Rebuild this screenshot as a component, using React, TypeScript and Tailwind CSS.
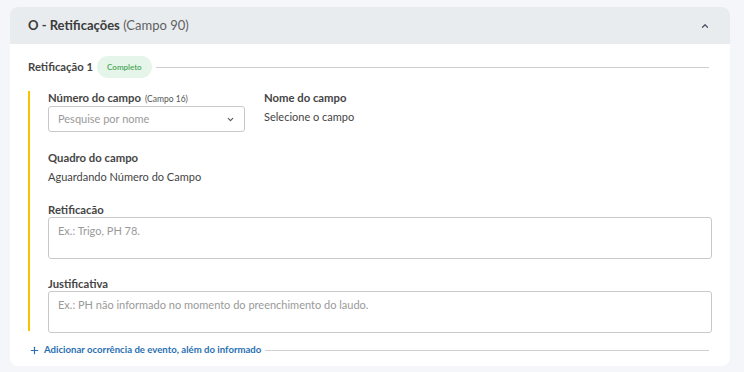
import { ChevronDown, ChevronUp, Plus } from "lucide-react";

const font = { fontFamily: "Lato, 'Noto Sans', sans-serif" };

function Label({ children }: { children: React.ReactNode }) {
  return <div className="text-[11.3px] font-bold leading-[14px] text-[#454545]">{children}</div>;
}

export default function App() {
  return (
    <div className="w-[744px] h-[372px] bg-[#f4f6fa] pt-[7px] px-[10px]" style={font}>
      <div className="w-[720px] h-[359px] rounded-lg bg-white overflow-hidden">
        <header className="h-[37px] bg-[#e9ecef] pl-[18px] pr-[20px] flex items-center justify-between">
          <h2 className="text-[13px] text-[#3b3b3b]">
            <span className="font-bold">O - Retificações</span>{" "}
            <span className="text-[#5f5f5f]">(Campo 90)</span>
          </h2>
          <ChevronUp className="w-[10px] h-[10px] text-[#4a5568]" strokeWidth={3} />
        </header>

        <div className="pl-[18px] pr-[21px] pt-[12px]">
          <div className="flex items-center">
            <span className="text-[11.3px] font-bold text-[#454545]">Retificação 1</span>
            <span className="ml-[4px] h-[22px] px-[10px] rounded-full bg-[#e5f5e9] text-[#45a755] text-[8px] font-semibold flex items-center">
              Completo
            </span>
            <div className="flex-1 ml-[4px] h-px bg-[#cfcfcf]" />
          </div>

          <section className="mt-[13px] border-l-2 border-[#f5c400] pl-[18px] h-[240px]">
            <div className="flex">
              <div className="w-[197px]">
                <div className="flex items-baseline gap-[4px]">
                  <Label>Número do campo</Label>
                  <span className="text-[8.5px] leading-[14px] text-[#555]">(Campo 16)</span>
                </div>
                <div className="h-[26px] border border-[#c9c9c9] rounded-[3px] px-[9px] flex items-center justify-between">
                  <span className="text-[11px] text-[#9a9a9a]">Pesquise por nome</span>
                  <ChevronDown className="w-[9px] h-[9px] text-[#555]" strokeWidth={3} />
                </div>
              </div>
              <div className="ml-[19px]">
                <Label>Nome do campo</Label>
                <div className="mt-[5px] text-[11px] leading-[14px] text-[#444]">Selecione o campo</div>
              </div>
            </div>

            <div className="mt-[19px]">
              <Label>Quadro do campo</Label>
              <div className="mt-[5px] text-[11px] leading-[14px] text-[#444]">Aguardando Número do Campo</div>
            </div>

            <div className="mt-[19px]">
              <Label>Retificacão</Label>
              <div className="h-[42px] w-[664px] border border-[#c9c9c9] rounded-[3px] px-[9px] pt-[6px] text-[11px] leading-[14px] text-[#9a9a9a]">
                Ex.: Trigo, PH 78.
              </div>
            </div>

            <div className="mt-[18px]">
              <Label>Justificativa</Label>
              <div className="h-[42px] w-[664px] border border-[#c9c9c9] rounded-[3px] px-[9px] pt-[6px] text-[11px] leading-[14px] text-[#9a9a9a]">
                Ex.: PH não informado no momento do preenchimento do laudo.
              </div>
            </div>
          </section>

          <div className="mt-[12px] h-[14px] flex items-center">
            <Plus className="w-[11px] h-[11px] text-[#2a6fb3] ml-[1px]" strokeWidth={2.5} />
            <span className="ml-[4px] text-[9.6px] font-bold text-[#2a6fb3]">
              Adicionar ocorrência de evento, além do informado
            </span>
            <div className="flex-1 ml-[4px] h-px bg-[#cfcfcf]" />
          </div>
        </div>
      </div>
    </div>
  );
}
